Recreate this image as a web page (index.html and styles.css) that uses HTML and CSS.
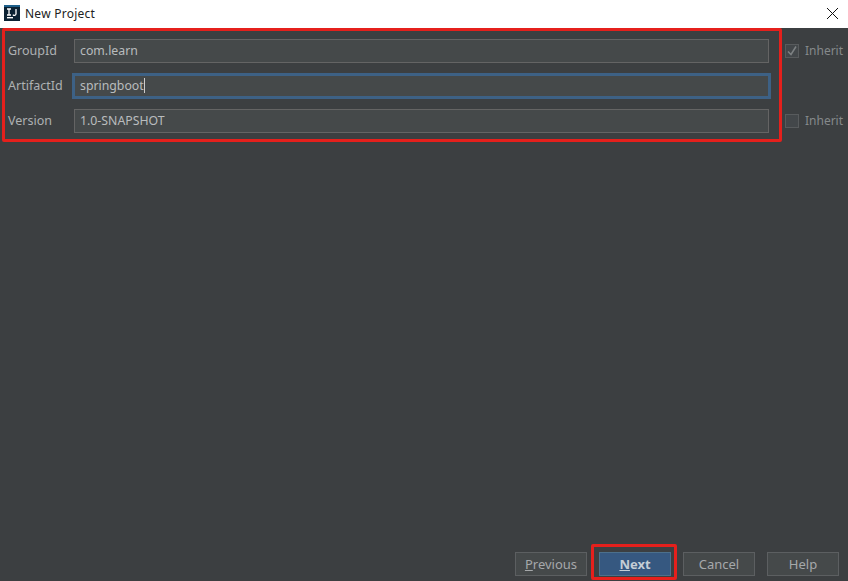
FILE: index.html
```html
<!DOCTYPE html>
<html lang="en">
<head>
<meta charset="utf-8">
<title>New Project</title>
<link rel="stylesheet" href="styles.css">
</head>
<body>
<div class="window">
  <header class="titlebar">
    <svg class="logo" width="16" height="16" viewBox="0 0 16 16"><rect width="16" height="16" fill="#0c2233"/><rect x="0" y="0" width="16" height="2" fill="#1d5f8a"/><rect x="3" y="12" width="6" height="1.4" fill="#fff"/><path d="M3 4h4M5 4v6M3 10h4M12 4v5a1.6 1.6 0 0 1-3 .6" fill="none" stroke="#fff" stroke-width="1.3"/></svg>
    <span class="title">New Project</span>
    <svg class="close" width="13" height="13" viewBox="0 0 13 13"><path d="M1 1l11 11M12 1L1 12" stroke="#111" stroke-width="1" fill="none"/></svg>
  </header>
  <main class="content">
    <form class="form">
      <label class="label">GroupId</label>
      <div class="field">com.learn</div>
      <div class="inherit">
        <span class="check"><svg width="12" height="12" viewBox="0 0 12 12"><path d="M2 6.5l3 3 5-8" fill="none" stroke="#7d8183" stroke-width="1.5"/></svg></span>
        <span class="inherit-text">Inherit</span>
      </div>
      <label class="label">ArtifactId</label>
      <div class="field focused">springboot<span class="caret"></span></div>
      <div></div>
      <label class="label">Version</label>
      <div class="field">1.0-SNAPSHOT</div>
      <div class="inherit">
        <span class="check"></span>
        <span class="inherit-text">Inherit</span>
      </div>
    </form>
    <footer class="buttons">
      <button class="btn" type="button"><u>P</u>revious</button>
      <button class="btn primary" type="button"><u>N</u>ext</button>
      <button class="btn" type="button">Cancel</button>
      <button class="btn" type="button">Help</button>
    </footer>
  </main>
  <div class="mark mark-form"></div>
  <div class="mark mark-next"></div>
</div>
</body>
</html>
```
FILE: styles.css
```css
* { box-sizing: border-box; }
html, body { margin: 0; height: 100%; }
body { font-family: "Noto Sans", "Open Sans", sans-serif; background: #3c3f41; overflow: hidden; }
.window { position: relative; width: 848px; height: 581px; display: flex; flex-direction: column; }
.titlebar { height: 28px; flex: none; background: #fff; display: flex; align-items: center; padding: 0 9px 2px 4px; }
.logo { flex: none; }
.title { margin-left: 5px; font-size: 12px; color: #222; letter-spacing: 0.25px; }
.close { margin-left: auto; }
.content { flex: 1; display: flex; flex-direction: column; justify-content: space-between; padding: 11px 9px 5px 8px; }
.form { display: grid; grid-template-columns: 66px 695px 1fr; grid-auto-rows: 24px; row-gap: 11px; align-items: center; }
.label { font-size: 12.5px; line-height: 22px; color: #aeb1b3; }
.field { height: 24px; background: #45494a; border: 1px solid #646464; color: #b9bcbe; font-size: 12.3px; line-height: 21px; padding-left: 5px; white-space: nowrap; }
.focused { border: 3px solid #3d6185; margin: 0 -2px; width: calc(100% + 4px); height: 26px; line-height: 19px; padding-left: 5px; }
.caret { display: inline-block; width: 1px; height: 15px; background: #ccc; vertical-align: -3px; }
.inherit { display: flex; align-items: center; gap: 6px; padding-left: 16px; font-size: 12px; color: #85898b; white-space: nowrap; }
.inherit-text { line-height: 22px; margin-bottom: 1px; }
.check { width: 14px; height: 14px; flex: none; border: 1px solid #585b5d; background: #43474a; display: flex; align-items: center; justify-content: center; }
.buttons { display: flex; justify-content: flex-end; gap: 12px; }
.btn { width: 72px; height: 24px; padding: 0; background: #45494a; border: 1px solid #5c5f61; color: #a5a8aa; font: 13px "Noto Sans", "Open Sans", sans-serif; }
.primary { background: #365880; border-color: #4c708c; color: #c5ced6; font-weight: 700; }
.mark { position: absolute; border: 3px solid #e5201c; border-radius: 2px; pointer-events: none; }
.mark-form { left: 2px; top: 28px; width: 780px; height: 114px; }
.mark-next { left: 591px; top: 544px; width: 86px; height: 36px; }
```
